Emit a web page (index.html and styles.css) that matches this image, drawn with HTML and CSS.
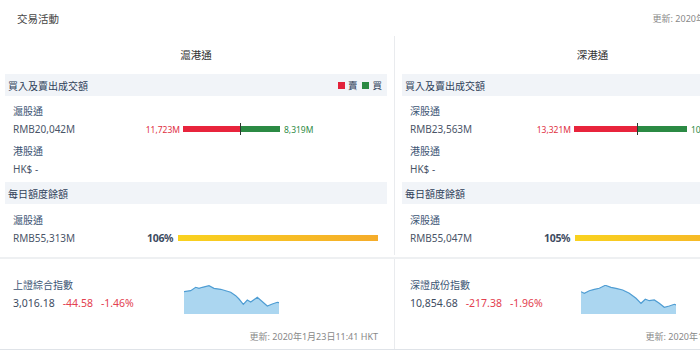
FILE: index.html
```html
<!DOCTYPE html>
<html lang="zh-Hant">
<head>
  <meta charset="UTF-8" />
  <meta name="viewport" content="width=device-width, initial-scale=1.0"/>
  <title>交易活動</title>
  <link rel="stylesheet" href="styles.css">
</head>
<body>
  <div class="page">
    <header class="top">
      <span class="title">交易活動</span>
      <span class="updated">更新: 2020年1月23日11:41 HKT</span>
    </header>

    <div class="cols main">
      <section class="col">
        <h2 class="col-title">滬港通</h2>
        <div class="band">
          <span>買入及賣出成交額</span>
          <span class="legend"><i class="sq sell"></i>賣<i class="sq buy"></i>買</span>
        </div>
        <div class="items">
          <div class="item">
            <div class="name">滬股通</div>
            <div class="line">
              <span class="amount">RMB20,042M</span>
              <div class="split">
                <div class="half left"><span class="num sell-t">11,723M</span><span class="bar red" style="width:57px"></span></div>
                <div class="half right"><span class="bar green" style="width:39px"></span><span class="num buy-t">8,319M</span></div>
              </div>
            </div>
          </div>
          <div class="item">
            <div class="name">港股通</div>
            <div class="line"><span class="amount">HK$ -</span></div>
          </div>
        </div>
        <div class="band"><span>每日額度餘額</span></div>
        <div class="items quota-items">
          <div class="item">
            <div class="name">滬股通</div>
            <div class="line">
              <span class="amount">RMB55,313M</span>
              <span class="pct">106%</span>
              <span class="quota"></span>
            </div>
          </div>
        </div>
      </section>

      <section class="col">
        <h2 class="col-title">深港通</h2>
        <div class="band">
          <span>買入及賣出成交額</span>
          <span class="legend"><i class="sq sell"></i>賣<i class="sq buy"></i>買</span>
        </div>
        <div class="items">
          <div class="item">
            <div class="name">深股通</div>
            <div class="line">
              <span class="amount">RMB23,563M</span>
              <div class="split">
                <div class="half left"><span class="num sell-t">13,321M</span><span class="bar red" style="width:63px"></span></div>
                <div class="half right"><span class="bar green" style="width:49px"></span><span class="num buy-t">10,242M</span></div>
              </div>
            </div>
          </div>
          <div class="item">
            <div class="name">港股通</div>
            <div class="line"><span class="amount">HK$ -</span></div>
          </div>
        </div>
        <div class="band"><span>每日額度餘額</span></div>
        <div class="items quota-items">
          <div class="item">
            <div class="name">深股通</div>
            <div class="line">
              <span class="amount">RMB55,047M</span>
              <span class="pct">105%</span>
              <span class="quota"></span>
            </div>
          </div>
        </div>
      </section>
    </div>

    <div class="cols index-row">
      <section class="col">
        <div class="idx">
          <div class="idx-top">
            <div class="idx-info">
              <div class="name">上證綜合指數</div>
              <div class="idx-val">3,016.18<span class="down">-44.58</span><span class="down">-1.46%</span></div>
            </div>
            <svg class="spark" width="95" height="29" viewBox="0 0 95 29">
              <path class="area" d="M0 6.7 L6.7 5.7 L11.7 2.3 L15 3.3 L18.3 2.3 L25 0.7 L30 3.3 L36.7 4.3 L46.7 7.3 L51.7 10.7 L55 14 L59.3 19.3 L63.3 15 L66.7 17 L73.3 12.3 L77.3 15.7 L83.3 21 L88.3 19 L93.3 17.3 L95 17.7 L95 29 L0 29 Z"/>
              <path class="stroke" d="M0 6.7 L6.7 5.7 L11.7 2.3 L15 3.3 L18.3 2.3 L25 0.7 L30 3.3 L36.7 4.3 L46.7 7.3 L51.7 10.7 L55 14 L59.3 19.3 L63.3 15 L66.7 17 L73.3 12.3 L77.3 15.7 L83.3 21 L88.3 19 L93.3 17.3 L95 17.7"/>
            </svg>
          </div>
          <div class="foot">更新: 2020年1月23日11:41 HKT</div>
        </div>
      </section>
      <section class="col">
        <div class="idx">
          <div class="idx-top">
            <div class="idx-info">
              <div class="name">深證成份指數</div>
              <div class="idx-val">10,854.68<span class="down">-217.38</span><span class="down">-1.96%</span></div>
            </div>
            <svg class="spark" width="95" height="29" viewBox="0 0 95 29">
              <path class="area" d="M0 6.7 L3.3 8.3 L8.3 5.7 L13.3 4.3 L18.3 3.3 L24.3 0.3 L30 2.3 L35 3.3 L41.7 5 L48.3 8.3 L55 13.3 L60 18.3 L64.3 14.3 L68.3 15.7 L73.3 15 L78.3 18.3 L83.3 22.3 L88.3 21 L93.3 19.3 L95 20 L95 29 L0 29 Z"/>
              <path class="stroke" d="M0 6.7 L3.3 8.3 L8.3 5.7 L13.3 4.3 L18.3 3.3 L24.3 0.3 L30 2.3 L35 3.3 L41.7 5 L48.3 8.3 L55 13.3 L60 18.3 L64.3 14.3 L68.3 15.7 L73.3 15 L78.3 18.3 L83.3 22.3 L88.3 21 L93.3 19.3 L95 20"/>
            </svg>
          </div>
          <div class="foot">更新: 2020年1月23日11:41 HKT</div>
        </div>
      </section>
    </div>
  </div>
</body>
</html>
```

FILE: styles.css
```css
body {
  margin: 0;
  background: #fff;
  font-family: "Noto Sans", "Noto Sans CJK TC", sans-serif;
  color: #3d4b5f;
  overflow: hidden;
}

.page {
  width: 790px;
  border-bottom: 2px solid #dfe3e8;
}

.top {
  height: 36px;
  display: flex;
  align-items: center;
  justify-content: space-between;
  padding: 0 9px 0 17px;
}

.title {
  font-size: 10.5px;
  color: #444;
}

.updated,
.foot {
  font-size: 9px;
  color: #888;
}

.cols {
  display: grid;
  grid-template-columns: 395px 395px;
}

.col {
  padding: 0 7px 0 7px;
}

.col:first-child {
  padding-left: 5px;
  border-right: 1px solid #e9ebee;
}

.main {
  border-bottom: 2px solid #eef0f2;
  padding-bottom: 2px;
}

.col-title {
  margin: 0;
  height: 38px;
  line-height: 38px;
  text-align: center;
  font-size: 10.5px;
  font-weight: normal;
  color: #333;
}

.band {
  height: 22px;
  background: #f1f4f8;
  display: flex;
  align-items: center;
  justify-content: space-between;
  padding: 0 5px 0 3px;
  font-size: 10px;
  color: #2f4058;
}

.legend {
  display: flex;
  align-items: center;
  font-size: 9.5px;
}

.sq {
  width: 7px;
  height: 7px;
  margin: 0 3px 0 5px;
}

.sq.sell { background: #e3223a; }
.sq.buy { background: #2a8a43; }

.items {
  padding: 6px 9px 0 8px;
}

.quota-items {
  padding-top: 7px;
  padding-bottom: 8px;
}

.item {
  margin-bottom: 4px;
}

.quota-items .item {
  margin-bottom: 0;
}

.name {
  font-size: 10px;
  line-height: 18px;
  color: #3b5473;
}

.line {
  display: flex;
  align-items: center;
  height: 18px;
}

.amount {
  width: 100px;
  flex: none;
  font-size: 10px;
  color: #4a5568;
}

.split {
  display: flex;
}

.half {
  display: flex;
  align-items: center;
  height: 12px;
}

.half.left {
  width: 127px;
  justify-content: flex-end;
}

.half.right {
  border-left: 1px solid #2c3a30;
}

.bar {
  height: 6px;
}

.bar.red { background: #e8243c; }
.bar.green { background: #2b8a44; }

.num {
  font-size: 8.5px;
}

.sell-t {
  color: #e0303f;
  margin-right: 3px;
}

.buy-t {
  color: #2e8b46;
  margin-left: 4px;
}

.quota-items .amount {
  width: 134px;
}

.pct {
  width: 31px;
  flex: none;
  font-size: 10.5px;
  font-weight: bold;
  letter-spacing: -0.3px;
  color: #3d4b5f;
}

.quota {
  flex: 1;
  height: 6px;
  background: linear-gradient(to right, #f9d21f, #f5ac2a);
}

.index-row .col {
  padding-top: 9px;
}

.idx {
  padding: 8px 9px 5px 8px;
}

.idx-top {
  display: flex;
}

.idx-info {
  width: 171px;
  flex: none;
}

.idx-val {
  font-size: 10.5px;
  line-height: 18px;
  color: #3d4b5f;
}

.down {
  color: #e3404f;
  margin-left: 8px;
}

.spark {
  margin-top: 9px;
  display: block;
}

.spark .area { fill: #abd6f0; }
.spark .stroke {
  fill: none;
  stroke: #4f9dd3;
  stroke-width: 1.2;
}

.foot {
  margin-top: 16px;
  line-height: 14px;
  text-align: right;
}
```
